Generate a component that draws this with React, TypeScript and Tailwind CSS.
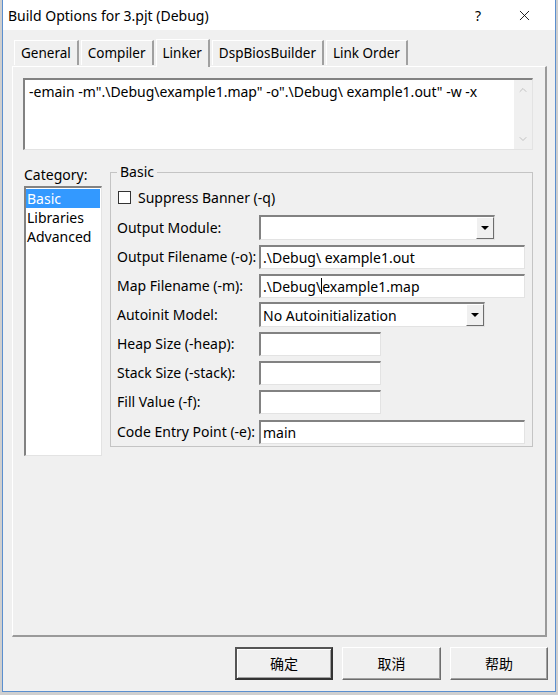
import React from 'react';
import { X, ChevronUp, ChevronDown } from 'lucide-react';

const FONT = { fontFamily: '"Noto Sans", "Noto Sans CJK SC", sans-serif' };

// Sunken edit box border (classic Windows look)
const sunken =
  'border-t-2 border-l-2 border-b border-r border-t-[#828282] border-l-[#828282] border-b-[#e3e3e3] border-r-[#e3e3e3] bg-white';

function DropButton() {
  return (
    <div className="w-[18px] h-full flex items-center justify-center bg-[#f0f0f0] border border-t-white border-l-white border-b-[#6d6d6d] border-r-[#6d6d6d]">
      <div className="w-0 h-0 border-l-[4px] border-r-[4px] border-t-[4px] border-l-transparent border-r-transparent border-t-black" />
    </div>
  );
}

function Combo({ width, value }: { width: string; value?: string }) {
  return (
    <div className={`${width} h-[25px] flex items-stretch ${sunken}`}>
      <div className="flex-1 flex items-center pl-[2px] text-[14px] text-black">{value}</div>
      <DropButton />
    </div>
  );
}

function Edit({ width, children }: { width: string; children?: React.ReactNode }) {
  return (
    <div className={`${width} h-[24px] flex items-center pl-[2px] text-[14px] text-black ${sunken}`}>
      {children}
    </div>
  );
}

function Row({ label, children }: { label: string; children: React.ReactNode }) {
  return (
    <div className="flex items-center h-[25px]">
      <div className="w-[142px] text-[14px] text-black whitespace-nowrap">{label}</div>
      {children}
    </div>
  );
}

const TABS = ['General', 'Compiler', 'Linker', 'DspBiosBuilder', 'Link Order'];

export default function App() {
  return (
    <div className="w-[558px] h-[695px] bg-[#cfcfcf] flex" style={FONT}>
      <div className="ml-[2px] w-[554px] h-[692px] border-l border-r border-b border-[#5b8fcf] bg-[#f0f0f0] flex flex-col">
        {/* Title bar */}
        <div className="h-[30px] bg-white flex items-center pl-[5px] shrink-0">
          <span className="text-[14px] text-black">Build Options for 3.pjt (Debug)</span>
          <span className="ml-auto mr-[35px] text-[14px] text-black">?</span>
          <X size={17} strokeWidth={1.2} className="mr-[22px] text-black" />
        </div>

        {/* Tabs */}
        <div className="h-[36px] flex items-end pl-[11px] shrink-0">
          {TABS.map((t) => (
            <div
              key={t}
              className={`mr-[2px] px-[6px] flex items-center text-[13.5px] text-black bg-[#f0f0f0] border-t border-l border-r-2 border-t-white border-l-white border-r-[#a0a0a0] ${
                t === 'Linker' ? 'h-[28px] relative top-[1px]' : 'h-[25px] mb-[1px] pt-[1px]'
              }`}
            >
              {t}
            </div>
          ))}
        </div>

        {/* Tab page */}
        <div className="ml-[9px] w-[535px] h-[571px] border-t border-l border-t-white border-l-white border-r-2 border-b-2 border-r-[#9a9a9a] border-b-[#9a9a9a] flex flex-col shrink-0">
          {/* Command line */}
          <div className={`ml-[10px] mt-[11px] w-[510px] h-[72px] flex ${sunken}`}>
            <div className="flex-1 pl-[4px] pt-[1px] text-[14px] text-black whitespace-nowrap overflow-hidden">
              -emain -m".\Debug\example1.map" -o".\Debug\ example1.out" -w -x
            </div>
            <div className="w-[18px] bg-[#f0f0f0] flex flex-col items-center justify-between py-[4px]">
              <ChevronUp size={12} strokeWidth={2} className="text-[#c2c2c2]" />
              <ChevronDown size={12} strokeWidth={2} className="text-[#c2c2c2]" />
            </div>
          </div>

          <div className="flex mt-[15px]">
            {/* Category */}
            <div className="ml-[11px] w-[78px] flex flex-col">
              <div className="text-[14px] text-black leading-[19px] mb-[2px]">Category:</div>
              <div className={`h-[270px] flex flex-col pt-[1px] ${sunken}`}>
                <div className="h-[19px] mr-[1px] bg-[#3399ff] text-white text-[14px] leading-[19px] pl-[1px]">Basic</div>
                <div className="h-[19px] text-black text-[14px] leading-[19px] pl-[1px]">Libraries</div>
                <div className="h-[20px] text-black text-[14px] leading-[20px] pl-[1px]">Advanced</div>
              </div>
            </div>

            {/* Basic group */}
            <div className="ml-[8px] mt-[7px] w-[423px] h-[275px] border border-[#c4c4c4] relative flex flex-col pl-[6px]">
              <span className="absolute -top-[11px] left-[6px] px-[3px] bg-[#f0f0f0] text-[14px] text-black leading-[19px]">
                Basic
              </span>
              <div className="flex items-center mt-[17px] h-[14px]">
                <div className="ml-[1px] w-[13px] h-[13px] bg-white border border-[#333]" />
                <span className="ml-[7px] text-[14px] text-black">Suppress Banner (-q)</span>
              </div>
              <div className="flex flex-col gap-[4px] mt-[11px]">
                <Row label="Output Module:">
                  <Combo width="w-[236px]" />
                </Row>
                <Row label="Output Filename (-o):">
                  <Edit width="w-[266px]">.\Debug\ example1.out</Edit>
                </Row>
                <Row label="Map Filename (-m):">
                  <Edit width="w-[266px]">
                    .\Debug\<span className="inline-block w-px h-[16px] bg-black" />example1.map
                  </Edit>
                </Row>
                <Row label="Autoinit Model:">
                  <Combo width="w-[226px]" value="No Autoinitialization" />
                </Row>
                <Row label="Heap Size (-heap):">
                  <Edit width="w-[122px]" />
                </Row>
                <Row label="Stack Size (-stack):">
                  <Edit width="w-[122px]" />
                </Row>
                <Row label="Fill Value (-f):">
                  <Edit width="w-[122px]" />
                </Row>
                <div className="mt-[1px]">
                  <Row label="Code Entry Point (-e):">
                    <Edit width="w-[266px]">main</Edit>
                  </Row>
                </div>
              </div>
            </div>
          </div>
        </div>

        {/* Buttons */}
        <div className="flex gap-[9px] ml-[232px] mt-[10px]">
          <button className="w-[98px] h-[33px] bg-[#f0f0f0] text-[14px] text-black border-2 border-t-[#555] border-l-[#555] border-b-[#333] border-r-[#333] shadow-[inset_1px_1px_0_#fff,inset_-1px_-1px_0_#a0a0a0]">
            确定
          </button>
          <button className="w-[99px] h-[33px] bg-[#f0f0f0] text-[14px] text-black border border-t-white border-l-white border-b-[#6d6d6d] border-r-[#6d6d6d] shadow-[inset_-1px_-1px_0_#a0a0a0]">
            取消
          </button>
          <button className="w-[98px] h-[33px] bg-[#f0f0f0] text-[14px] text-black border border-t-white border-l-white border-b-[#6d6d6d] border-r-[#6d6d6d] shadow-[inset_-1px_-1px_0_#a0a0a0]">
            帮助
          </button>
        </div>
      </div>
    </div>
  );
}
